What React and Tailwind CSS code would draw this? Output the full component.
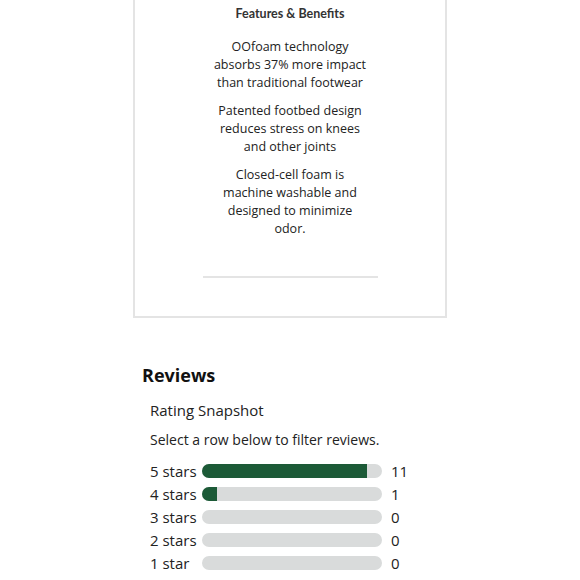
import React from 'react';

const features = [
  'OOfoam technology absorbs 37% more impact than traditional footwear',
  'Patented footbed design reduces stress on knees and other joints',
  'Closed-cell foam is machine washable and designed to minimize odor.',
];

const ratings = [
  { label: '5 stars', count: 11 },
  { label: '4 stars', count: 1 },
  { label: '3 stars', count: 0 },
  { label: '2 stars', count: 0 },
  { label: '1 star', count: 0 },
];

function RatingRow({ label, count, total }) {
  const pct = total ? (count / total) * 100 : 0;
  return (
    <div className="flex items-center h-[23px]">
      <span className="w-[52px] text-[15px] text-[#222]">{label}</span>
      <div className="w-[180px] h-[14px] rounded-full bg-[#d9dbdb] overflow-hidden">
        <div className="h-full bg-[#1c5a37]" style={{ width: pct + '%' }} />
      </div>
      <span className="ml-[9px] text-[15px] text-[#222]">{count}</span>
    </div>
  );
}

export default function App() {
  const total = ratings.reduce((s, r) => s + r.count, 0);
  return (
    <div className="w-[580px] h-[580px] bg-white overflow-hidden" style={{ fontFamily: '"Open Sans", sans-serif' }}>
      {/* features card */}
      <div className="mx-auto w-[314px] h-[318px] border-2 border-t-0 border-[#e4e4e4] flex flex-col items-center">
        <h3 className="mt-[5px] text-[12.5px] font-bold text-[#333]" style={{ fontFamily: 'Lato, sans-serif' }}>
          Features &amp; Benefits
        </h3>
        <div className="mt-[14px] w-[155px] flex flex-col gap-[10px]">
          {features.map((f) => (
            <p key={f} className="text-center text-[12.5px] leading-[18px] text-[#222]">{f}</p>
          ))}
        </div>
        <div className="mt-[38px] w-[175px] h-[2px] bg-[#e4e4e4]" />
      </div>

      {/* reviews */}
      <div className="pl-[142px] pt-[44px]">
        <h2 className="text-[18px] font-bold text-[#111]">Reviews</h2>
        <div className="pl-[8px]">
          <p className="mt-[10px] text-[15px] text-[#222]">Rating Snapshot</p>
          <p className="mt-[7px] text-[14px] text-[#222]">Select a row below to filter reviews.</p>
          <div className="mt-[10px]">
            {ratings.map((r) => (
              <RatingRow key={r.label} {...r} total={total} />
            ))}
          </div>
        </div>
      </div>
    </div>
  );
}
